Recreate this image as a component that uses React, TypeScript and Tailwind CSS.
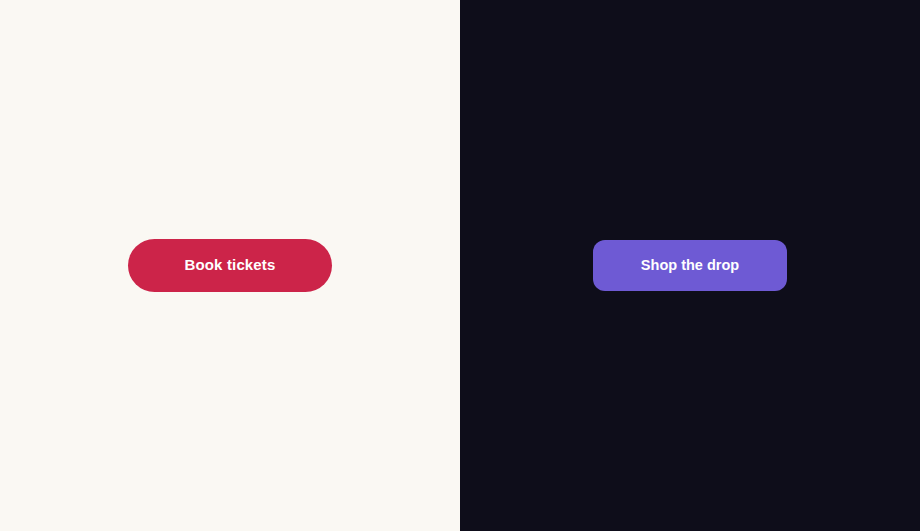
export default function App() {
  return (
    <div className="flex h-[531px] w-[920px] font-['Liberation_Sans',Arial,sans-serif]">
      <div className="flex flex-1 items-center justify-center bg-[#faf8f3]">
        <button className="flex h-[53px] w-[204px] items-center justify-center rounded-full bg-[#cc2449] text-[15px] font-bold tracking-[0.01em] text-white">
          Book tickets
        </button>
      </div>
      <div className="flex flex-1 items-center justify-center bg-[#0e0d1a]">
        <button className="flex h-[51px] w-[194px] items-center justify-center rounded-[12px] bg-[#6e5ad4] text-[14.5px] font-bold text-white">
          Shop the drop
        </button>
      </div>
    </div>
  );
}
